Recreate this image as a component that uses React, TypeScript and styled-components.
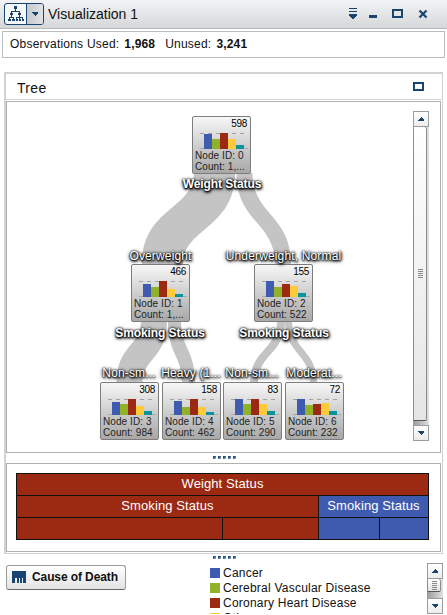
import React from "react";
import styled, { createGlobalStyle } from "styled-components";

const Global = createGlobalStyle`
  *, *::before, *::after { box-sizing: border-box; }
  html, body { margin: 0; height: 100%; overflow: hidden; background: #fff; }
  body { font-family: "Liberation Sans", Arial, sans-serif; color: #111; }
`;

const C = { blue: "#3f5bb0", green: "#8fb229", red: "#9c2912", yellow: "#ffca39", teal: "#06959f", navy: "#17456f" };
const barColors = [C.blue, C.green, C.red, C.yellow, C.teal];

const Page = styled.div`
  width: 447px;
  height: 615px;
  overflow: hidden;
  display: flex;
  flex-direction: column;
`;

const TitleBar = styled.header`
  height: 29px;
  flex: none;
  display: flex;
  align-items: center;
  padding: 0 16px 0 4px;
  background: linear-gradient(#f2f3f4, #d5d7d9);
  border-bottom: 1px solid #b5b7ba;
`;

const TypeButton = styled.div`
  display: flex;
  width: 40px;
  height: 22px;
  border: 1px solid ${C.navy};
  border-radius: 3px;
  overflow: hidden;
  background: #f6f7f8;
`;

const TypeIcon = styled.div`
  width: 22px;
  display: flex;
  align-items: center;
  justify-content: center;
`;

const TypeArrow = styled(TypeIcon)`
  width: 17px;
  border-left: 1px solid ${C.navy};
  background: linear-gradient(90deg, #c6c9cc, #dfe1e3);
`;

const Title = styled.h1`
  margin: 0 auto 0 4px;
  padding-bottom: 1px;
  font-size: 14px;
  line-height: 16px;
  font-weight: 400;
`;

const InfoBox = styled.div`
  flex: none;
  margin: 2px 2px 0;
  width: 443px;
  height: 27px;
  border: 1px solid #b9bdc1;
  padding: 0 0 1px 7px;
  display: flex;
  align-items: center;
  font-size: 12px;
  white-space: pre;
`;

const InfoLabel = styled.span`
  letter-spacing: 0.22px;
  margin-right: 5px;
`;

const InfoValue = styled.b`
  margin-right: 10px;
  letter-spacing: 0.16px;
`;

const Panel = styled.section`
  flex: none;
  margin: 14px 0 0 4px;
  width: 439px;
  height: 482px;
  border: 1px solid #cfd3d6;
  border-width: 2px 1px 1px 2px;
`;

const PanelHeader = styled.div`
  height: 26px;
  border-bottom: 1px solid #cfd3d6;
  display: flex;
  align-items: center;
  justify-content: space-between;
  padding: 2px 18px 0 11px;
  font-size: 14px;
  line-height: 16px;
  letter-spacing: 0.3px;
`;

const MaximizeIcon = styled.svg`
  width: 11px;
  height: 9px;
  margin-bottom: 3px;
`;

const Canvas = styled.div`
  position: relative;
  margin-top: 1px;
  width: 435px;
  height: 352px;
  border: 1px solid #b1b1b1;
  display: flex;
  justify-content: flex-end;
  padding: 9px 11px 0 0;
`;

const Grip = styled.div`
  flex: none;
  display: flex;
  gap: 2px;
  height: 3px;
  justify-content: center;
  width: 24px;
  margin: 3px 0 0 206px;
`;

const FooterGrip = styled(Grip)`
  margin: 2px 0 0 212px;
`;

const GripDot = styled.i`
  width: 3px;
  height: 3px;
  background: linear-gradient(135deg, #26507f 35%, #a7bad0);
`;

const IcicleBox = styled.div`
  margin-top: 4px;
  width: 435px;
  height: 89px;
  border: 1px solid #b1b1b1;
  padding: 9px 11px 0 9px;
`;

const Icicle = styled.div`
  width: 413px;
  height: 67px;
  background: #111;
  padding: 1px;
  display: grid;
  grid-template-columns: 205px 95px 60px 48px;
  grid-template-rows: 21px 21px 21px;
  gap: 1px;
`;

const IcicleCell = styled.div<{ $span: number; $blue?: boolean }>`
  grid-column: span ${(p) => p.$span};
  background: ${(p) => (p.$blue ? C.blue : C.red)};
  color: #fff;
  font-size: 13px;
  line-height: 20px;
  letter-spacing: 0.1px;
  text-align: center;
  white-space: nowrap;
`;

const NodeBox = styled.div<{ $x: number; $y: number }>`
  position: absolute;
  left: ${(p) => p.$x - 7}px;
  top: ${(p) => p.$y - 102}px;
  width: 59px;
  height: 58px;
  border: 1px solid #7d7d7d;
  border-radius: 2px;
  background: linear-gradient(#f7f7f7, #cfcfcf 50%, #a8a8a8);
  padding: 1px 2px 0;
  font-size: 10px;
  line-height: 11px;
  color: #222;
  white-space: nowrap;
`;

const NodeCount = styled.div`
  text-align: right;
  height: 14px;
  line-height: 12px;
  padding-right: 1px;
  letter-spacing: -0.3px;
  color: #000;
`;

const Chart = styled.svg`
  display: block;
  margin-left: 5px;
  width: 50px;
  height: 18px;
`;

const NodeLine = styled.div`
  letter-spacing: 0.08px;
`;

const NodeLabel = styled.div<{ $x: number; $y: number; $bold?: boolean }>`
  position: absolute;
  left: ${(p) => p.$x - 7}px;
  top: ${(p) => p.$y - 102}px;
  transform: translate(-50%, -50%);
  font-size: 12px;
  line-height: 14px;
  font-weight: ${(p) => (p.$bold ? 700 : 400)};
  letter-spacing: ${(p) => (p.$bold ? "-0.08px" : "0.15px")};
  color: #fff;
  white-space: nowrap;
  text-shadow: 0 0 2px #000, 0 1px 2px #000, 1px 1px 3px #000, 0 1px 4px #000;
`;

const Edges = styled.svg`
  position: absolute;
  left: 0;
  top: 0;
  width: 400px;
  height: 350px;
`;

const Scroll = styled.div<{ $h: number }>`
  flex: none;
  width: 16px;
  height: ${(p) => p.$h}px;
  display: flex;
  flex-direction: column;
  background: linear-gradient(90deg, #999, #e2e2e2);
`;

const ScrollButton = styled.div`
  flex: none;
  height: 16px;
  border: 1px solid #9a9da0;
  background: linear-gradient(#fff, #ececec);
  display: flex;
  align-items: center;
  justify-content: center;
`;

const Thumb = styled.div<{ $gap: number }>`
  flex: 1;
  width: 14px;
  margin-bottom: ${(p) => p.$gap}px;
  border: 1px solid #8d8d8d;
  border-top: 0;
  border-bottom-color: #555;
  border-radius: 0 3px 2px 0;
  background: linear-gradient(#fff, #e5e5e5);
  display: flex;
  flex-direction: column;
  align-items: center;
  justify-content: center;
  gap: 1px;
`;

const ThumbLine = styled.i`
  flex: none;
  width: 5px;
  height: 1px;
  background: #8a8a8a;
`;

const Footer = styled.footer`
  flex: none;
  height: 51px;
  overflow: hidden;
  display: flex;
  padding: 0 4px 0 6px;
  margin-top: 4px;
`;

const RoleButton = styled.div`
  width: 120px;
  height: 25px;
  margin-top: 2px;
  border: 1px solid #9b9b9b;
  border-bottom-color: #666;
  border-radius: 3px;
  background: linear-gradient(#fff, #e3e3e3);
  display: flex;
  align-items: center;
  gap: 6px;
  padding: 0 0 1px 5px;
  font-size: 12px;
  font-weight: 700;
  letter-spacing: -0.1px;
  white-space: nowrap;
`;

const Legend = styled.div`
  margin: 2px auto 0 84px;
`;

const LegendRow = styled.div`
  display: flex;
  align-items: center;
  gap: 3px;
  height: 15px;
  font-size: 12px;
  letter-spacing: 0.23px;
  white-space: nowrap;
`;

const Swatch = styled.i<{ $c: string }>`
  width: 10px;
  height: 10px;
  background: ${(p) => p.$c};
`;

const Arrow = ({ down }: { down?: boolean }) => (
  <svg width="6" height="4" shapeRendering="crispEdges">
    <path d={down ? "M0 0H6V1L3 4L0 1Z" : "M3 0L6 3V4H0V3Z"} fill={C.navy} />
  </svg>
);

const ScrollBar = ({ height, gap }: { height: number; gap: number }) => (
  <Scroll $h={height}>
    <ScrollButton><Arrow /></ScrollButton>
    <Thumb $gap={gap}>{[0, 1, 2, 3, 4].map((i) => <ThumbLine key={i} />)}</Thumb>
    <ScrollButton><Arrow down /></ScrollButton>
  </Scroll>
);

const dots = [0, 1, 2, 3, 4].map((i) => <GripDot key={i} />);

const nodes = [
  { x: 192, y: 116, n: "598", c: "1,...", h: [15, 10, 16, 10, 4] },
  { x: 131, y: 264, n: "466", c: "1,...", h: [13, 10, 16, 8, 3] },
  { x: 254, y: 264, n: "155", c: "522", h: [16, 10, 13, 11, 4] },
  { x: 100, y: 382, n: "308", c: "984", h: [13, 11, 16, 9, 4] },
  { x: 162, y: 382, n: "158", c: "462", h: [14, 8, 16, 8, 3] },
  { x: 223, y: 382, n: "83", c: "290", h: [16, 11, 16, 11, 4] },
  { x: 285, y: 382, n: "72", c: "232", h: [16, 10, 11, 12, 4] },
];

const labels = [
  { x: 222, y: 184, t: "Weight Status", b: true },
  { x: 160.5, y: 256, t: "Overweight" },
  { x: 283.5, y: 256, t: "Underweight, Normal" },
  { x: 160, y: 333, t: "Smoking Status", b: true },
  { x: 284, y: 333, t: "Smoking Status", b: true },
  { x: 129, y: 373, t: "Non-sm..." },
  { x: 191, y: 373, t: "Heavy (1..." },
  { x: 252, y: 373, t: "Non-sm..." },
  { x: 314, y: 373, t: "Moderat..." },
];

// Each ribbon runs from left edge x0 at y0 to left edge x1 at y1, w wide.
const edges = [
  { x0: 194, y0: 173, x1: 142, y1: 264, w: 41 },
  { x0: 236.5, y0: 173, x1: 275, y1: 264, w: 16 },
  { x0: 141, y0: 321, x1: 116.5, y1: 383, w: 26 },
  { x0: 168, y0: 321, x1: 182, y1: 383, w: 13 },
  { x0: 277, y0: 321, x1: 250, y1: 383, w: 8 },
  { x0: 285, y0: 321, x1: 310, y1: 383, w: 7 },
];

const ribbon = ({ x0, y0, x1, y1, w }: (typeof edges)[number]) => {
  const mid = (y0 + y1) / 2;
  const shift = (x1 < x0 ? 1 : -1) * w * 0.24;
  const a = mid - shift;
  const b = mid + shift;
  return `M${x0} ${y0}C${x0} ${a} ${x1} ${a} ${x1} ${y1}H${x1 + w}C${x1 + w} ${b} ${x0 + w} ${b} ${x0 + w} ${y0}Z`;
};

export default function App() {
  return (
    <Page>
      <Global />
      <TitleBar>
        <TypeButton>
          <TypeIcon>
            <svg width="16" height="16" fill={C.navy} shapeRendering="crispEdges">
              <path d="M6 0h3v3H6zM7 3h1v2H7zM3 5h9v1H3zM3 5h1v3H3zM11 5h1v3h-1zM2 7h3v2H2zM10 7h3v2h-3zM3 9h1v2H3zM11 9h1v2h-1zM1 11h5v1H1zM8 11h6v1H8zM1 11h1v2H1zM5 11h1v2H5zM8 11h1v2H8zM11 11h1v2h-1zM14 11h1v2h-1zM0 13h3v2H0zM4 13h3v2H4zM8 13h2v2H8zM11 13h2v2h-2zM14 13h2v2h-2z" />
            </svg>
          </TypeIcon>
          <TypeArrow><Arrow down /></TypeArrow>
        </TypeButton>
        <Title>Visualization 1</Title>
        <svg width="83" height="16" viewBox="348 6 83 16" fill={C.navy} shapeRendering="crispEdges">
          <path d="M349 8h8v1h-8zM349 11h8v1h-8z" />
          <path d="M349 14h8v1l-3 4h-2l-3-4z" />
          <path d="M369 15h8v3h-8z" />
          <path fillRule="evenodd" d="M392 9h11v9h-11zM394 11v5h7v-5z" />
          <path d="M419.5 10.5l7 7M426.5 10.5l-7 7" stroke={C.navy} strokeWidth="2.2" shapeRendering="auto" />
        </svg>
      </TitleBar>
      <InfoBox>
        <InfoLabel>Observations Used:</InfoLabel><InfoValue>1,968</InfoValue>
        <InfoLabel>Unused:</InfoLabel><InfoValue>3,241</InfoValue>
      </InfoBox>
      <Panel>
        <PanelHeader>
          Tree
          <MaximizeIcon fill={C.navy} shapeRendering="crispEdges">
            <path fillRule="evenodd" d="M0 0h11v9H0zM2 2v5h7V2z" />
          </MaximizeIcon>
        </PanelHeader>
        <Canvas>
          <Edges viewBox="7 102 400 350" fill="#c4c4c4">
            {edges.map((e, i) => <path key={i} d={ribbon(e)} />)}
          </Edges>
          {nodes.map((n, i) => (
            <NodeBox key={i} $x={n.x} $y={n.y}>
              <NodeCount>{n.n}</NodeCount>
              <Chart viewBox="0 0 50 18" shapeRendering="crispEdges">
                <path d="M0 1.5H45" stroke="#a2a2a2" strokeDasharray="4 4" />
                <path d="M0 16.5H48" stroke="#aaa" />
                {n.h.map((h, k) => <rect key={k} x={4 + k * 8} y={17 - h} width="8" height={h} fill={barColors[k]} />)}
              </Chart>
              <NodeLine>Node ID: {i}</NodeLine>
              <NodeLine>Count: {n.c}</NodeLine>
            </NodeBox>
          ))}
          {labels.map((l, i) => <NodeLabel key={i} $x={l.x} $y={l.y} $bold={l.b}>{l.t}</NodeLabel>)}
          <ScrollBar height={330} gap={4} />
        </Canvas>
        <Grip>{dots}</Grip>
        <IcicleBox>
          <Icicle>
            <IcicleCell $span={4}>Weight Status</IcicleCell>
            <IcicleCell $span={2}>Smoking Status</IcicleCell>
            <IcicleCell $span={2} $blue>Smoking Status</IcicleCell>
            <IcicleCell $span={1} />
            <IcicleCell $span={1} />
            <IcicleCell $span={1} $blue />
            <IcicleCell $span={1} $blue />
          </Icicle>
        </IcicleBox>
      </Panel>
      <FooterGrip>{dots}</FooterGrip>
      <Footer>
        <RoleButton>
          <svg width="14" height="12" fill={C.navy} shapeRendering="crispEdges">
            <path d="M0 0H14V12H11V7H10V12H8V7H7V12H5V7H3V12H0Z" />
          </svg>
          Cause of Death
        </RoleButton>
        <Legend>
          <LegendRow><Swatch $c={C.blue} />Cancer</LegendRow>
          <LegendRow><Swatch $c={C.green} />Cerebral Vascular Disease</LegendRow>
          <LegendRow><Swatch $c={C.red} />Coronary Heart Disease</LegendRow>
          <LegendRow><Swatch $c={C.yellow} />Other</LegendRow>
        </Legend>
        <ScrollBar height={51} gap={6} />
      </Footer>
    </Page>
  );
}
